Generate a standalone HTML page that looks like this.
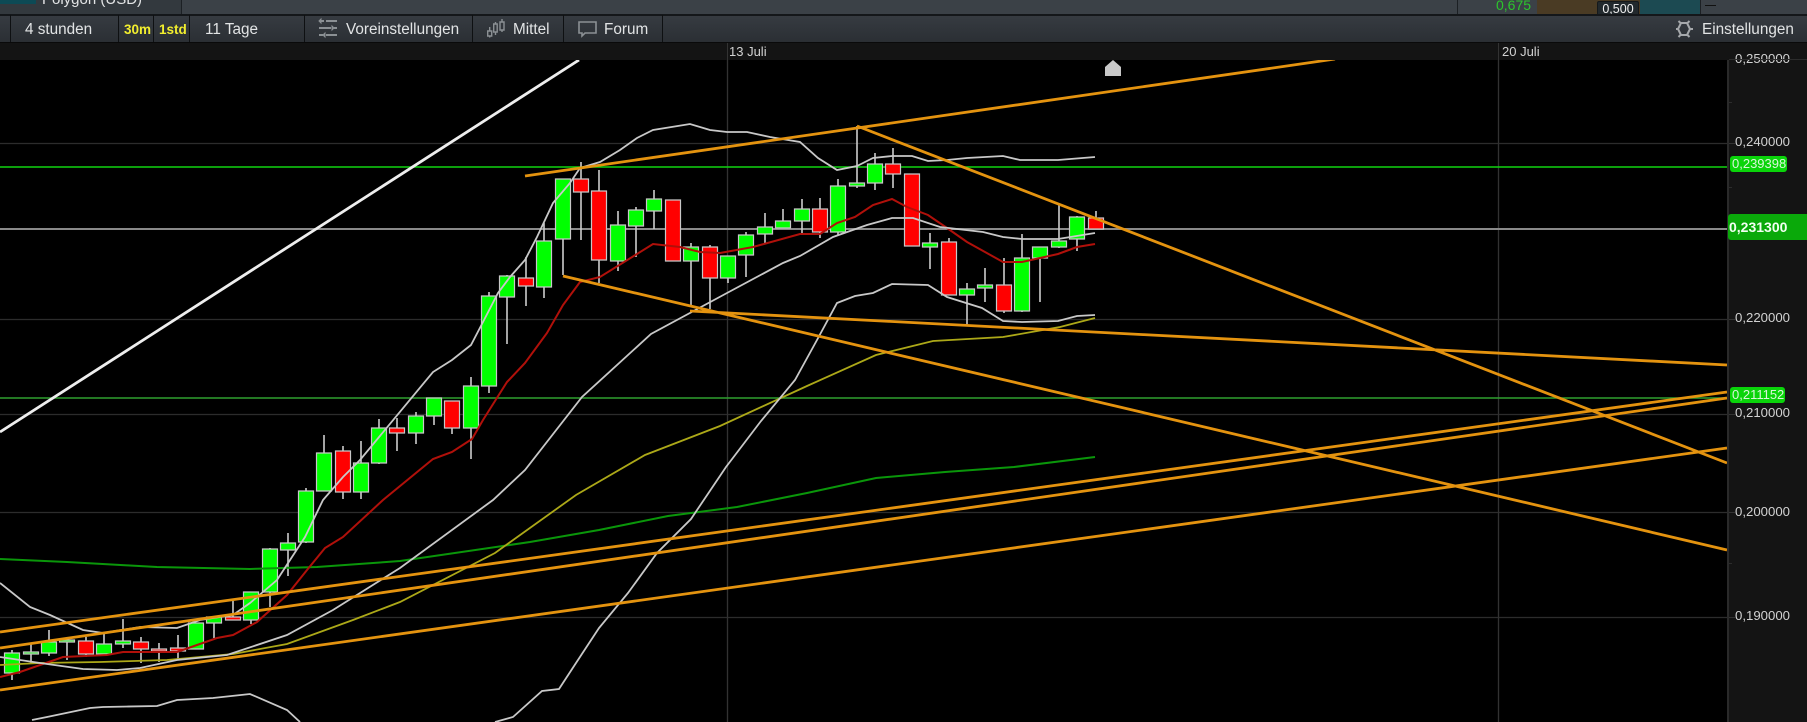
<!DOCTYPE html>
<html><head><meta charset="utf-8"><style>
html,body{margin:0;padding:0;background:#000}
body{width:1807px;height:722px;overflow:hidden;position:relative;font-family:"Liberation Sans",sans-serif}
.a{position:absolute;white-space:nowrap}
.t{position:absolute;top:17px;height:26px;line-height:26px;font-size:15.3px;color:#e2e4e5;white-space:nowrap}
.y{color:#f2ee2e;font-weight:bold;font-size:13.5px}
.l{position:absolute;left:1735px;font-size:13.2px;line-height:16px;color:#d2d2d2;white-space:nowrap}
.b{position:absolute;color:#d8f5d8;font-size:13px;line-height:16px;border-radius:3px;white-space:nowrap}
</style></head><body>
<div class="a" style="left:0;top:0;width:1807px;height:14px;background:#3b4147"></div>
<div class="a" style="left:0;top:0;width:181px;height:14px;background:#33393e"></div>
<div class="a" style="left:181px;top:0;width:1px;height:14px;background:#1c2024"></div>
<div class="a" style="left:0;top:0;width:36px;height:4px;background:#0d4a55"></div>
<div class="a" style="left:42px;top:-9px;font-size:15px;line-height:17px;color:#e2e4e5">Polygon (USD)</div>
<div class="a" style="left:1457px;top:0;width:1px;height:14px;background:#1c2024"></div>
<div class="a" style="left:1496px;top:-3px;font-size:14px;line-height:16px;color:#2cc52c">0,675</div>
<div class="a" style="left:1537px;top:0;width:103px;height:14px;background:#4a3b24"></div>
<div class="a" style="left:1640px;top:0;width:60px;height:14px;background:#1c4a52"></div>
<div class="a" style="left:1700px;top:0;width:1px;height:14px;background:#1c2024"></div>
<div class="a" style="left:1597px;top:1px;width:42px;height:13px;background:#22292d;border:1px solid #15191c;border-bottom:0;border-radius:2px 2px 0 0;box-sizing:border-box;color:#f0f0f0;font-size:12.5px;line-height:15px;text-align:center">0,500</div>
<div class="a" style="left:1705px;top:5px;width:11px;height:1px;background:#111"></div>
<div class="a" style="left:0;top:14px;width:1807px;height:2px;background:#14171a"></div>
<div class="a" style="left:0;top:16px;width:1807px;height:26px;background:linear-gradient(#363b41,#2b2f34)"></div>
<div class="a" style="left:0;top:42px;width:1807px;height:18px;background:#141414;border-top:1px solid #0a0a0a;box-sizing:border-box"></div>
<div class="a" style="left:10px;top:15px;width:1px;height:27px;background:#0e1012"></div>
<div class="a" style="left:118px;top:15px;width:1px;height:27px;background:#0e1012"></div>
<div class="a" style="left:153px;top:15px;width:1px;height:27px;background:#0e1012"></div>
<div class="a" style="left:189px;top:15px;width:1px;height:27px;background:#0e1012"></div>
<div class="a" style="left:304px;top:15px;width:1px;height:27px;background:#0e1012"></div>
<div class="a" style="left:472px;top:15px;width:1px;height:27px;background:#0e1012"></div>
<div class="a" style="left:563px;top:15px;width:1px;height:27px;background:#0e1012"></div>
<div class="a" style="left:662px;top:15px;width:1px;height:27px;background:#0e1012"></div>
<div class="t" style="left:25px">4 stunden</div>
<div class="t y" style="left:124px">30m</div>
<div class="t y" style="left:159px">1std</div>
<div class="t" style="left:205px">11 Tage</div>
<div class="t" style="left:346px">Voreinstellungen</div>
<div class="t" style="left:513px">Mittel</div>
<div class="t" style="left:604px">Forum</div>
<div class="t" style="left:1702px">Einstellungen</div>
<svg class="a" style="left:0;top:0" width="1807" height="60" fill="none" stroke="#8b9094">
<path stroke-width="2" d="M321 21h3M326 21h11M319 28h12M334 28h3M319 35h4M326 35h11"/>
<path stroke-width="1" fill="#8b9094" d="M319 21l2-2v4zM334 28l-2-2v4zM323 35l2-2v4z"/>
<path stroke-width="1.4" d="M487.700 31h4v5h-4zM489.700 27v4M489.700 36v1.500M493.700 24h3.500v8h-3.500zM495.500 22v2M495.500 32v3M500 22h4v8h-4zM502 19v3M502 30v2"/>
<path stroke-width="1.6" d="M579 22h17v11h-11l-3 3v-3h-3z"/>
<path stroke="#a5a8ab" stroke-width="2" d="M1681 23h6l3 6-3 6h-6l-3-6z"/>
<path stroke="#a5a8ab" stroke-width="2" d="M1676 29h2.500M1690 29h3M1678.500 21l2.500 2.500M1689.500 21l-2.500 2.500M1678.500 37l2.500-2.500M1689.500 37l-2.500-2.500"/>
</svg>
<div class="a" style="left:729px;top:44px;font-size:13px;line-height:16px;color:#d2d2d2">13 Juli</div>
<div class="a" style="left:1502px;top:44px;font-size:13px;line-height:16px;color:#d2d2d2">20 Juli</div>
<div class="a" style="left:727px;top:43px;width:1px;height:17px;background:#333"></div>
<div class="a" style="left:1498px;top:43px;width:1px;height:17px;background:#333"></div>

<svg class="a" style="left:0;top:60px;filter:blur(.35px)" width="1807" height="662" viewBox="0 60 1807 662" fill="none">
<path stroke="#2c2c2c" stroke-width="1.200" d="M0 143.500H1727M0 319.500H1727M0 414.500H1727M0 512.500H1727M0 617.500H1727"/>
<path stroke="#323232" stroke-width="1.300" d="M727.500 60V722M1498.500 60V722"/>
<path stroke="#10d410" stroke-width="1.600" d="M0 167H1727"/>
<path stroke="#2f9f2f" stroke-width="1.600" d="M0 398H1727"/>
<path stroke="#8a8a8a" stroke-width="2" d="M0 229H1727"/>
<path stroke="#cccccc" stroke-width="1.600" d="M12 650V680M31 643V663M49 630V656M67 640V660M86 637V657M104 634V656M123 619V648M141 637V663M159 643V662M178 635V660M214 617V638M233 601V620M251 592V624M270 548V607M288 533V576M306 488V543M324 435V491M343 446V499M361 441V499M379 419V464M397 418V451M416 412V444M434 398V425M452 401V434M471 377V459M489 292V393M507 275V344M526 257V306M544 223V298M563 179V275M581 162V240M599 170V283M618 211V271M636 207V257M654 190V229M691 243V305M710 245V309M728 256V283M746 232V277M765 213V244M783 209V228M802 199V235M820 198V238M838 179V235M857 126V188M875 153V190M893 148V188M930 233V269M949 238V295M967 283V325M985 268V302M1004 258V313M1022 234V312M1040 247V302M1059 205V248M1077 216V251M1096 211V229"/>
<path fill="#00ff00" stroke="#c8c8c8" stroke-width="1.200" d="M4.500 653h15v20h-15zM23.500 652h15v2h-15zM41.500 642h15v11h-15zM59.500 640h15v2h-15zM96.500 644h15v10h-15zM115.500 641h15v3h-15zM188.500 623h15v26h-15zM206.500 617h15v6h-15zM243.500 592h15v28h-15zM262.500 549h15v43h-15zM280.500 543h15v7h-15zM298.500 491h15v51h-15zM316.500 453h15v38h-15zM353.500 463h15v29h-15zM371.500 428h15v35h-15zM408.500 416h15v17h-15zM426.500 398h15v18h-15zM463.500 386h15v42h-15zM481.500 296h15v90h-15zM499.500 276h15v21h-15zM536.500 241h15v46h-15zM555.500 179h15v60h-15zM610.500 225h15v36h-15zM628.500 210h15v16h-15zM646.500 199h15v12h-15zM683.500 247h15v14h-15zM720.500 256h15v22h-15zM738.500 235h15v20h-15zM757.500 227h15v7h-15zM775.500 221h15v7h-15zM794.500 209h15v12h-15zM830.500 186h15v46h-15zM849.500 183h15v3h-15zM867.500 164h15v19h-15zM922.500 243h15v4h-15zM959.500 289h15v6h-15zM977.500 285h15v3h-15zM1014.500 258h15v53h-15zM1032.500 247h15v11h-15zM1051.500 241h15v6h-15zM1069.500 217h15v22h-15z"/>
<path fill="#ff0000" stroke="#c8c8c8" stroke-width="1.200" d="M78.500 641h15v13h-15zM133.500 642h15v7h-15zM151.500 649h15v2h-15zM170.500 648h15v3h-15zM225.500 617h15v3h-15zM335.500 451h15v41h-15zM389.500 428h15v5h-15zM444.500 401h15v27h-15zM518.500 278h15v8h-15zM573.500 179h15v13h-15zM591.500 191h15v69h-15zM665.500 200h15v61h-15zM702.500 247h15v31h-15zM812.500 209h15v23h-15zM885.500 164h15v10h-15zM904.500 174h15v72h-15zM941.500 242h15v53h-15zM996.500 285h15v26h-15zM1088.500 218h15v11h-15z"/>
<path stroke="#0a960a" stroke-width="2" d="M0 559L67 562L157 567L250 569L317 567L400 561L530 542L599 530L668 516L737 507L807 493L876 478L945 472L1014 467L1095 457"/>
<path stroke="#aca818" stroke-width="1.800" d="M0 665L40 663L100 662L167 660L233 654L287 644L320 632L353 620L400 602L495 553L576 495L645 455L720 426L807 386L876 355L933 341L1003 337L1060 327L1095 318"/>
<path stroke="#b0100a" stroke-width="2" d="M0 677L20 672L63 657L107 655L123 652L177 652L197 645L217 638L233 635L257 622L287 595L307 570L325 548L343 537L383 500L433 459L452 452L472 439L483 420L507 382L525 363L547 333L563 305L580 282L600 277L653 244L680 247L700 252L720 253L753 247L800 234L820 234L837 223L855 217L873 205L892 199L907 207L928 215L947 228L967 242L1003 262L1022 262L1058 254L1077 247L1095 244"/>
<path stroke="#c8c8c8" stroke-width="1.800" d="M0 583L30 607L50 615L83 630L103 633L140 627L177 628L200 620L233 615L250 603L277 580L305 537L323 500L343 477L360 460L433 372L452 360L471 345L483 322L498 293L510 277L525 260L537 237L553 203L570 183L580 168L600 162L620 150L637 138L653 130L690 124L710 130L727 132L747 132L770 137L800 142L818 158L837 170L857 166L873 158L892 156L912 156L928 161L947 160L967 158L1003 156L1020 160L1058 160L1095 157"/>
<path stroke="#c8c8c8" stroke-width="1.800" d="M0 657L40 663L83 669L117 670L140 668L177 660L227 655L287 635L333 610L400 568L493 500L525 470L582 397L651 334L727 293L783 263L800 256L833 237L867 225L892 218L913 218L940 227L983 232L1003 237L1022 239L1058 239L1095 233"/>
<path stroke="#c8c8c8" stroke-width="1.800" d="M32 720L47 717L90 708L103 707L157 706L177 700L213 698L250 694L287 710L300 722M495 722L513 717L542 691L559 689L576 663L599 628L628 593L657 553L691 519L726 467L761 421L795 380L817 340L837 303L855 296L873 293L892 284L928 285L947 297L982 308L1003 321L1022 322L1058 321L1077 316L1095 315"/>
<path stroke="#eeeeee" stroke-width="2.800" d="M0 432L579 60"/>
<path stroke="#e4930f" stroke-width="2.800" d="M525 176L1335 59M857 126L1727 463M563 276L1727 550M690 311L1727 365M0 632L1727 392M0 648L1727 398M0 690L1727 448"/>
<path fill="#c8c8c8" d="M1113 60L1121 67V76H1105V67Z"/>
</svg>

<div class="a" style="left:1727px;top:60px;width:80px;height:662px;background:#141414;border-left:2px solid #2a2a2a;box-sizing:border-box"></div>
<svg class="a" style="left:1727px;top:60px" width="12" height="662" fill="none" stroke="#333"><path d="M2 83.500H8M2 259.500H8M2 354.500H8M2 452.500H8M2 557.500H8"/><path stroke="#2c2c2c" d="M2 42.500H5M2 127.500H5M2 503.500H5"/></svg>
<div class="l" style="top:51px">0,250000</div>
<div class="a" style="left:1729px;top:59px;width:78px;height:1px;background:#2c2c2c"></div>
<div class="l" style="top:134px">0,240000</div>
<div class="b" style="left:1730px;top:156px;width:57px;height:16px;background:#0ad40a;padding-left:2px;box-sizing:border-box">0,239398</div>
<div class="a" style="left:1728px;top:214px;width:79px;height:26px;background:#0aa90a;border-radius:3px 0 0 3px;color:#f2fff2;font-weight:bold;font-size:14px;line-height:26px;padding-left:1px;box-sizing:border-box">0,231300</div>
<div class="l" style="top:310px">0,220000</div>
<div class="b" style="left:1730px;top:387px;width:55px;height:16px;background:#0ad40a;padding-left:2px;box-sizing:border-box">0,211152</div>
<div class="l" style="top:405px">0,210000</div>
<div class="l" style="top:504px">0,200000</div>
<div class="l" style="top:608px">0,190000</div>
</body></html>
